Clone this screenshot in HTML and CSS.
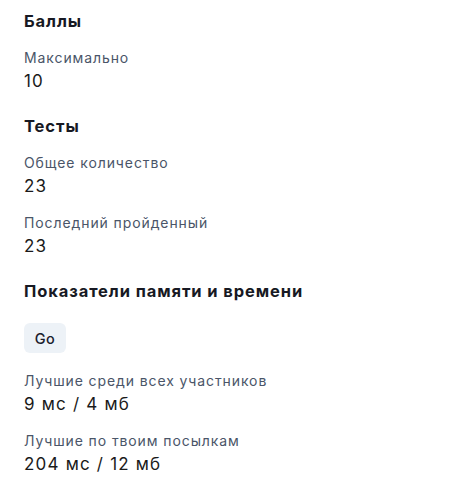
FILE: index.html
```html
<!DOCTYPE html>
<html lang="ru">
<head>
<meta charset="utf-8">
<link rel="stylesheet" href="styles.css">
</head>
<body>
<div class="page">
  <section class="section">
    <h2 class="heading">Баллы</h2>
    <div class="items">
      <div class="stat"><div class="label">Максимально</div><div class="value">10</div></div>
    </div>
  </section>
  <section class="section">
    <h2 class="heading">Тесты</h2>
    <div class="items">
      <div class="stat"><div class="label">Общее количество</div><div class="value">23</div></div>
      <div class="stat"><div class="label">Последний пройденный</div><div class="value">23</div></div>
    </div>
  </section>
  <section class="section">
    <h2 class="heading">Показатели памяти и времени</h2>
    <button class="btn" type="button">Go</button>
    <div class="items items-after-btn">
      <div class="stat"><div class="label">Лучшие среди всех участников</div><div class="value">9 мс / 4 мб</div></div>
      <div class="stat"><div class="label">Лучшие по твоим посылкам</div><div class="value">204 мс / 12 мб</div></div>
    </div>
  </section>
</div>
</body>
</html>
```
FILE: styles.css
```css
html, body { margin: 0; padding: 0; background: #ffffff; }
body { font-family: Inter, "Noto Sans", sans-serif; color: #1a1a1a; }
.page { display: flex; flex-direction: column; gap: 19px; padding: 8px 24px 0; }
.section { display: flex; flex-direction: column; align-items: flex-start; }
.heading { margin: 0; font-size: 16.5px; line-height: 26px; font-weight: 700; color: #171923; letter-spacing: 0.9px; }
.items { display: flex; flex-direction: column; gap: 14px; margin-top: 14px; }
.items-after-btn { margin-top: 18px; }
.stat { display: flex; flex-direction: column; }
.label { font-size: 14px; line-height: 20px; color: #4a5568; letter-spacing: 0.9px; }
.value { font-size: 17px; line-height: 26px; color: #1a1a1a; letter-spacing: 1.2px; }
.btn { margin-top: 19px; height: 30px; width: 42px; padding: 0; border: 0; border-radius: 6px; background: #edf2f7; font-family: inherit; font-size: 14.5px; font-weight: 500; color: #1a202c; letter-spacing: 0.5px; }
```
